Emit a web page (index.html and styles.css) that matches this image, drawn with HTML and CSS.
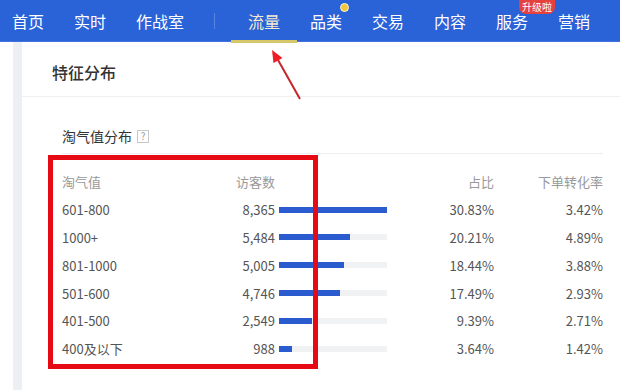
FILE: index.html
```html
<!DOCTYPE html>
<html lang="zh-CN">
<head>
<meta charset="utf-8">
<link rel="stylesheet" href="styles.css">
</head>
<body>
<div class="page">
  <nav class="nav">
    <span class="nav-item">首页</span>
    <span class="nav-item">实时</span>
    <span class="nav-item">作战室</span>
    <span class="nav-divider"></span>
    <span class="nav-item active">流量</span>
    <span class="nav-item dot">品类</span>
    <span class="nav-item">交易</span>
    <span class="nav-item">内容</span>
    <span class="nav-item">服务<span class="badge">升级啦</span></span>
    <span class="nav-item">营销</span>
  </nav>
  <div class="main">
    <div class="gutter"></div>
    <div class="card">
      <div class="card-head">特征分布</div>
      <div class="section">
        <div class="sec-title">淘气值分布<span class="help">?</span></div>
        <div class="table">
          <div class="row head">
            <span class="c1">淘气值</span><span class="c2">访客数</span><span class="c3"></span><span class="c4">占比</span><span class="c5">下单转化率</span>
          </div>
          <div class="row">
            <span class="c1">601-800</span><span class="c2">8,365</span><span class="c3"><span class="track"><span class="fill" style="width:100%"></span></span></span><span class="c4">30.83%</span><span class="c5">3.42%</span>
          </div>
          <div class="row">
            <span class="c1">1000+</span><span class="c2">5,484</span><span class="c3"><span class="track"><span class="fill" style="width:65.6%"></span></span></span><span class="c4">20.21%</span><span class="c5">4.89%</span>
          </div>
          <div class="row">
            <span class="c1">801-1000</span><span class="c2">5,005</span><span class="c3"><span class="track"><span class="fill" style="width:59.8%"></span></span></span><span class="c4">18.44%</span><span class="c5">3.88%</span>
          </div>
          <div class="row">
            <span class="c1">501-600</span><span class="c2">4,746</span><span class="c3"><span class="track"><span class="fill" style="width:56.7%"></span></span></span><span class="c4">17.49%</span><span class="c5">2.93%</span>
          </div>
          <div class="row">
            <span class="c1">401-500</span><span class="c2">2,549</span><span class="c3"><span class="track"><span class="fill" style="width:30.5%"></span></span></span><span class="c4">9.39%</span><span class="c5">2.71%</span>
          </div>
          <div class="row">
            <span class="c1">400及以下</span><span class="c2">988</span><span class="c3"><span class="track"><span class="fill" style="width:11.8%"></span></span></span><span class="c4">3.64%</span><span class="c5">1.42%</span>
          </div>
        </div>
      </div>
    </div>
  </div>
  <div class="annot-box"></div>
  <svg class="annot-arrow" width="60" height="70" viewBox="255 40 60 70">
    <line x1="300" y1="99" x2="278" y2="60" stroke="#c4262c" stroke-width="2"/>
    <polygon points="272,50 282.5,58 273.5,63" fill="#ee1c25"/>
  </svg>
</div>
</body>
</html>
```

FILE: styles.css
```css
* { box-sizing: border-box; }
html, body { margin: 0; padding: 0; }
body {
  width: 620px;
  height: 390px;
  overflow: hidden;
  background: #fff;
  font-family: "Noto Sans CJK SC", "Microsoft YaHei", sans-serif;
}
.page { position: relative; width: 620px; height: 390px; }

.nav {
  height: 42px;
  background: #2a62d8;
  display: flex;
  align-items: center;
  padding-left: 12px;
  border-bottom: 1px solid #3f72dc;
}
.nav-item {
  position: relative;
  color: #fff;
  font-size: 16px;
  line-height: 42px;
  margin-right: 30px;
}
.nav-item.active { color: #f3ecd0; }
.nav-item.active::after {
  content: "";
  position: absolute;
  left: -17px;
  right: -17px;
  bottom: -1px;
  height: 3px;
  background: #d6c76a;
}
.nav-item.dot::after {
  content: "";
  position: absolute;
  right: -7px;
  top: 3px;
  width: 7px;
  height: 7px;
  border-radius: 50%;
  background: #f3c640;
  border: 1px solid #fff6d0;
}
.nav-divider {
  width: 1px;
  height: 16px;
  background: rgba(255,255,255,0.22);
  margin-right: 33px;
}
.badge {
  position: absolute;
  left: 23px;
  top: 0;
  height: 14px;
  padding: 0 3px;
  line-height: 14px;
  font-size: 10px;
  color: #fff;
  background: #e5413f;
  border-radius: 0 0 7px 7px;
  white-space: nowrap;
}

.main {
  display: flex;
  height: 348px;
}
.gutter {
  width: 9px;
  margin-left: 13px;
  background: #eceff3;
}
.card {
  flex: 1;
  background: #fff;
}
.card-head {
  height: 55px;
  padding: 6px 0 0 30px;
  line-height: 49px;
  font-size: 16px;
  font-weight: 500;
  color: #333;
  border-bottom: 1px solid #eef0f3;
}
.section {
  padding: 0 17px 0 40px;
}
.sec-title {
  display: flex;
  align-items: center;
  padding-top: 29px;
  padding-bottom: 7px;
  height: 57px;
  font-size: 14px;
  line-height: 20px;
  color: #333;
  border-bottom: 1px solid #eceef1;
}
.help {
  display: inline-flex;
  align-items: center;
  justify-content: center;
  width: 12px;
  height: 13px;
  margin-left: 5px;
  border: 1px solid #c8c8c8;
  font-size: 10px;
  line-height: 1;
  color: #999;
}

.table { padding-top: 14px; }
.row {
  display: grid;
  grid-template-columns: 140px 73px 112px 107px 109px;
  height: 27.8px;
  align-items: center;
  font-size: 13px;
  color: #555;
}
.row.head { color: #999; }
.c2, .c4, .c5 { text-align: right; }
.c3 { padding-left: 4px; display: flex; align-items: center; }
.track {
  display: block;
  width: 108px;
  height: 6px;
  background: #f1f2f4;
}
.fill {
  display: block;
  height: 6px;
  background: #2a5bcf;
}

.annot-box {
  position: absolute;
  left: 48px;
  top: 155px;
  width: 270px;
  height: 214px;
  border: 5px solid #e60a14;
}
.annot-arrow {
  position: absolute;
  left: 255px;
  top: 40px;
}
```
